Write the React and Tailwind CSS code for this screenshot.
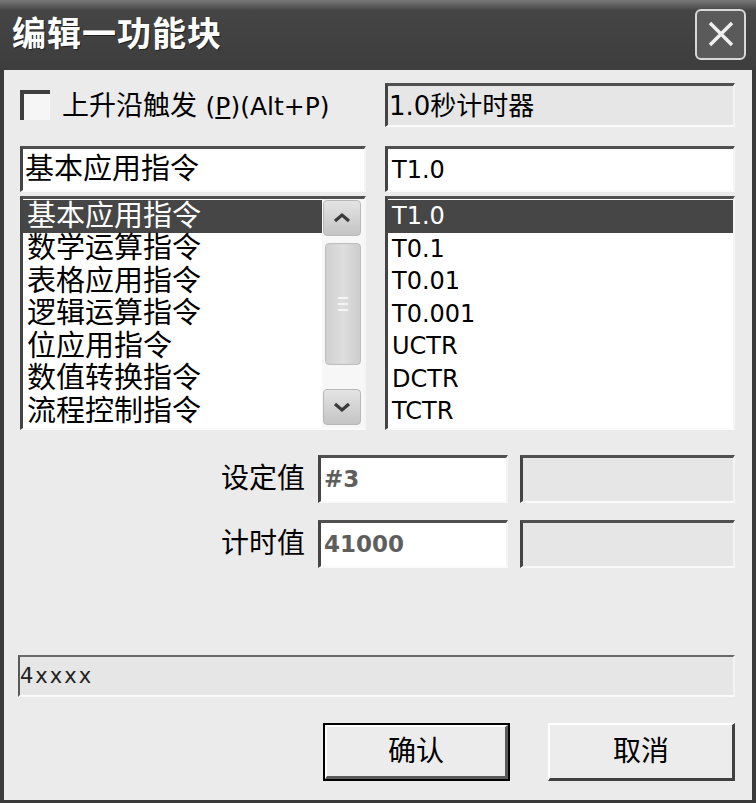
const cjk = "font-['DejaVu_Sans','Noto_Sans_CJK_SC',sans-serif]";

const leftItems = ["基本应用指令", "数学运算指令", "表格应用指令", "逻辑运算指令", "位应用指令", "数值转换指令", "流程控制指令"];
const rightItems = ["T1.0", "T0.1", "T0.01", "T0.001", "UCTR", "DCTR", "TCTR"];

const sunken = "border-t-[3px] border-l-[3px] border-t-[#505050] border-l-[#444] border-b-[2px] border-r-[2px] border-b-[#fafafa] border-r-[#f4f4f4]";

const ScrollBtn = ({ down }) => (
  <div className="h-[36px] w-[38px] rounded-[4px] border border-[#b8b8b8] bg-linear-to-b from-[#e4e4e4] to-[#c4c4c4] flex items-center justify-center">
    <svg width="18" height="12" viewBox="0 0 18 12">
      <path d={down ? "M2 3 L9 9 L16 3" : "M2 9 L9 3 L16 9"} fill="none" stroke="#3a3a3a" strokeWidth="3.2" />
    </svg>
  </div>
);

const App = () => {
  return (
    <div className={`w-[756px] h-[803px] bg-[#3a3a3a] flex flex-col ${cjk}`}>
      {/* title bar */}
      <div className="h-[70px] shrink-0 bg-linear-to-b from-[#7a7a7a] via-[#454545] via-15% to-[#3d3d3d] flex items-center justify-between pl-[12px] pr-[10px]">
        <span className="text-white font-bold text-[34px] leading-none tracking-[1px] pb-[2px] [text-shadow:1px_1px_0_#222]">编辑一功能块</span>
        <div className="w-[51px] h-[51px] rounded-[6px] border-2 border-[#d8d8d8] bg-[#5a5a5a] flex items-center justify-center mb-[2px]">
          <svg width="30" height="30" viewBox="0 0 30 30">
            <path d="M4 4 L26 26 M26 4 L4 26" stroke="#f0f0f0" strokeWidth="3.5" />
          </svg>
        </div>
      </div>

      {/* body */}
      <div className="flex-1 mx-[4px] mb-[3px] bg-[#ebebeb] pl-[16px] pr-[17px] pt-[13px] flex flex-col">
        {/* row 1 */}
        <div className="flex h-[44px] gap-[19px]">
          <div className="w-[346px] flex items-center gap-[12px]">
            <div className="w-[30px] h-[30px] bg-[#3f3f3f] pt-[4px] pl-[4px] flex">
              <div className="flex-1 bg-[#f6f6f6]" />
            </div>
            <span className="text-[27px] leading-none text-black">
              上升沿触发 <span className="text-[25px]">(<span className="underline">P</span>)(Alt+P)</span>
            </span>
          </div>
          <div className={`w-[350px] bg-[#e6e6e6] ${sunken} border-t-[2px] border-l-[2px] flex items-center pl-[1px]`}>
            <span className="text-[26px] leading-none text-black">1.0秒计时器</span>
          </div>
        </div>

        {/* row 2 */}
        <div className="flex h-[46px] gap-[19px] mt-[19px]">
          <div className={`w-[346px] bg-white ${sunken} flex items-center pl-[2px]`}>
            <span className="text-[29px] leading-none text-black">基本应用指令</span>
          </div>
          <div className={`w-[350px] bg-white ${sunken} flex items-center pl-[4px]`}>
            <span className="text-[24px] leading-none text-black">T1.0</span>
          </div>
        </div>

        {/* row 3: lists */}
        <div className="flex h-[234px] gap-[19px] mt-[4px]">
          <div className={`w-[346px] bg-white ${sunken} flex`}>
            <div className="flex-1 pt-[1px]">
              {leftItems.map((t, i) => (
                <div
                  key={t}
                  className={`h-[32.5px] flex items-center pl-[4px] text-[29px] leading-none ${i === 0 ? "bg-[#464646] text-white" : "text-black"}`}
                >
                  {t}
                </div>
              ))}
            </div>
            <div className="w-[42px] pl-[1px] pr-[3px] pt-[1px] pb-[3px] flex flex-col bg-[#f7f7f7]">
              <ScrollBtn />
              <div className="mt-[7px] h-[122px] w-[36px] ml-[2px] rounded-[4px] border border-[#bdbdbd] bg-linear-to-r from-[#d0d0d0] via-[#dedede] to-[#cdcdcd] flex flex-col items-center justify-center gap-[4px]">
                <div className="w-[10px] h-[2px] bg-[#f4f4f4]" />
                <div className="w-[10px] h-[2px] bg-[#f4f4f4]" />
                <div className="w-[10px] h-[2px] bg-[#f4f4f4]" />
              </div>
              <div className="flex-1" />
              <ScrollBtn down />
            </div>
          </div>
          <div className={`w-[350px] bg-white ${sunken} pt-[1px]`}>
            {rightItems.map((t, i) => (
              <div
                key={t}
                className={`h-[32.5px] flex items-center pl-[4px] text-[24px] leading-none ${i === 0 ? "bg-[#464646] text-white" : "text-black"}`}
              >
                {t}
              </div>
            ))}
          </div>
        </div>

        {/* row 4/5 */}
        {[
          ["设定值", "#3", "mt-[25px]"],
          ["计时值", "41000", "mt-[17px]"],
        ].map(([label, val, mt]) => (
          <div key={label} className={`flex h-[48px] ${mt}`}>
            <div className="w-[298px] pr-[13px] flex items-center justify-end">
              <span className="text-[28px] leading-none text-black">{label}</span>
            </div>
            <div className={`w-[190px] bg-white ${sunken} flex items-center pl-[3px]`}>
              <span className="text-[23px] font-bold leading-none text-[#5e5e5e]">{val}</span>
            </div>
            <div className={`w-[215px] ml-[12px] bg-[#e6e6e6] ${sunken}`} />
          </div>
        ))}

        {/* status */}
        <div className="h-[42px] mt-[87px] -ml-[2px] bg-[#e6e6e6] border-t-[2px] border-l-[2px] border-t-[#6a6a6a] border-l-[#5a5a5a] border-b-[2px] border-r-[2px] border-b-[#fafafa] border-r-[#f4f4f4] flex items-center">
          <span className="text-[21px] leading-none tracking-[2px] text-[#222]">4xxxx</span>
        </div>

        {/* buttons */}
        <div className="flex justify-end gap-[38px] mt-[26px]">
          <button className="w-[187px] h-[58px] border-2 border-black bg-[#ececec] flex">
            <span className="flex-1 flex items-center justify-center border-t-2 border-l-2 border-white border-b-[3px] border-r-[3px] border-b-[#5a5a5a] border-r-[#5a5a5a] text-[28px] leading-none text-black">
              确认
            </span>
          </button>
          <button className="w-[187px] h-[58px] bg-[#ececec] border-t-2 border-l-2 border-white border-b-[3px] border-r-[3px] border-b-[#404040] border-r-[#404040] flex items-center justify-center text-[28px] leading-none text-black">
            取消
          </button>
        </div>
      </div>
    </div>
  );
};

export default App;
